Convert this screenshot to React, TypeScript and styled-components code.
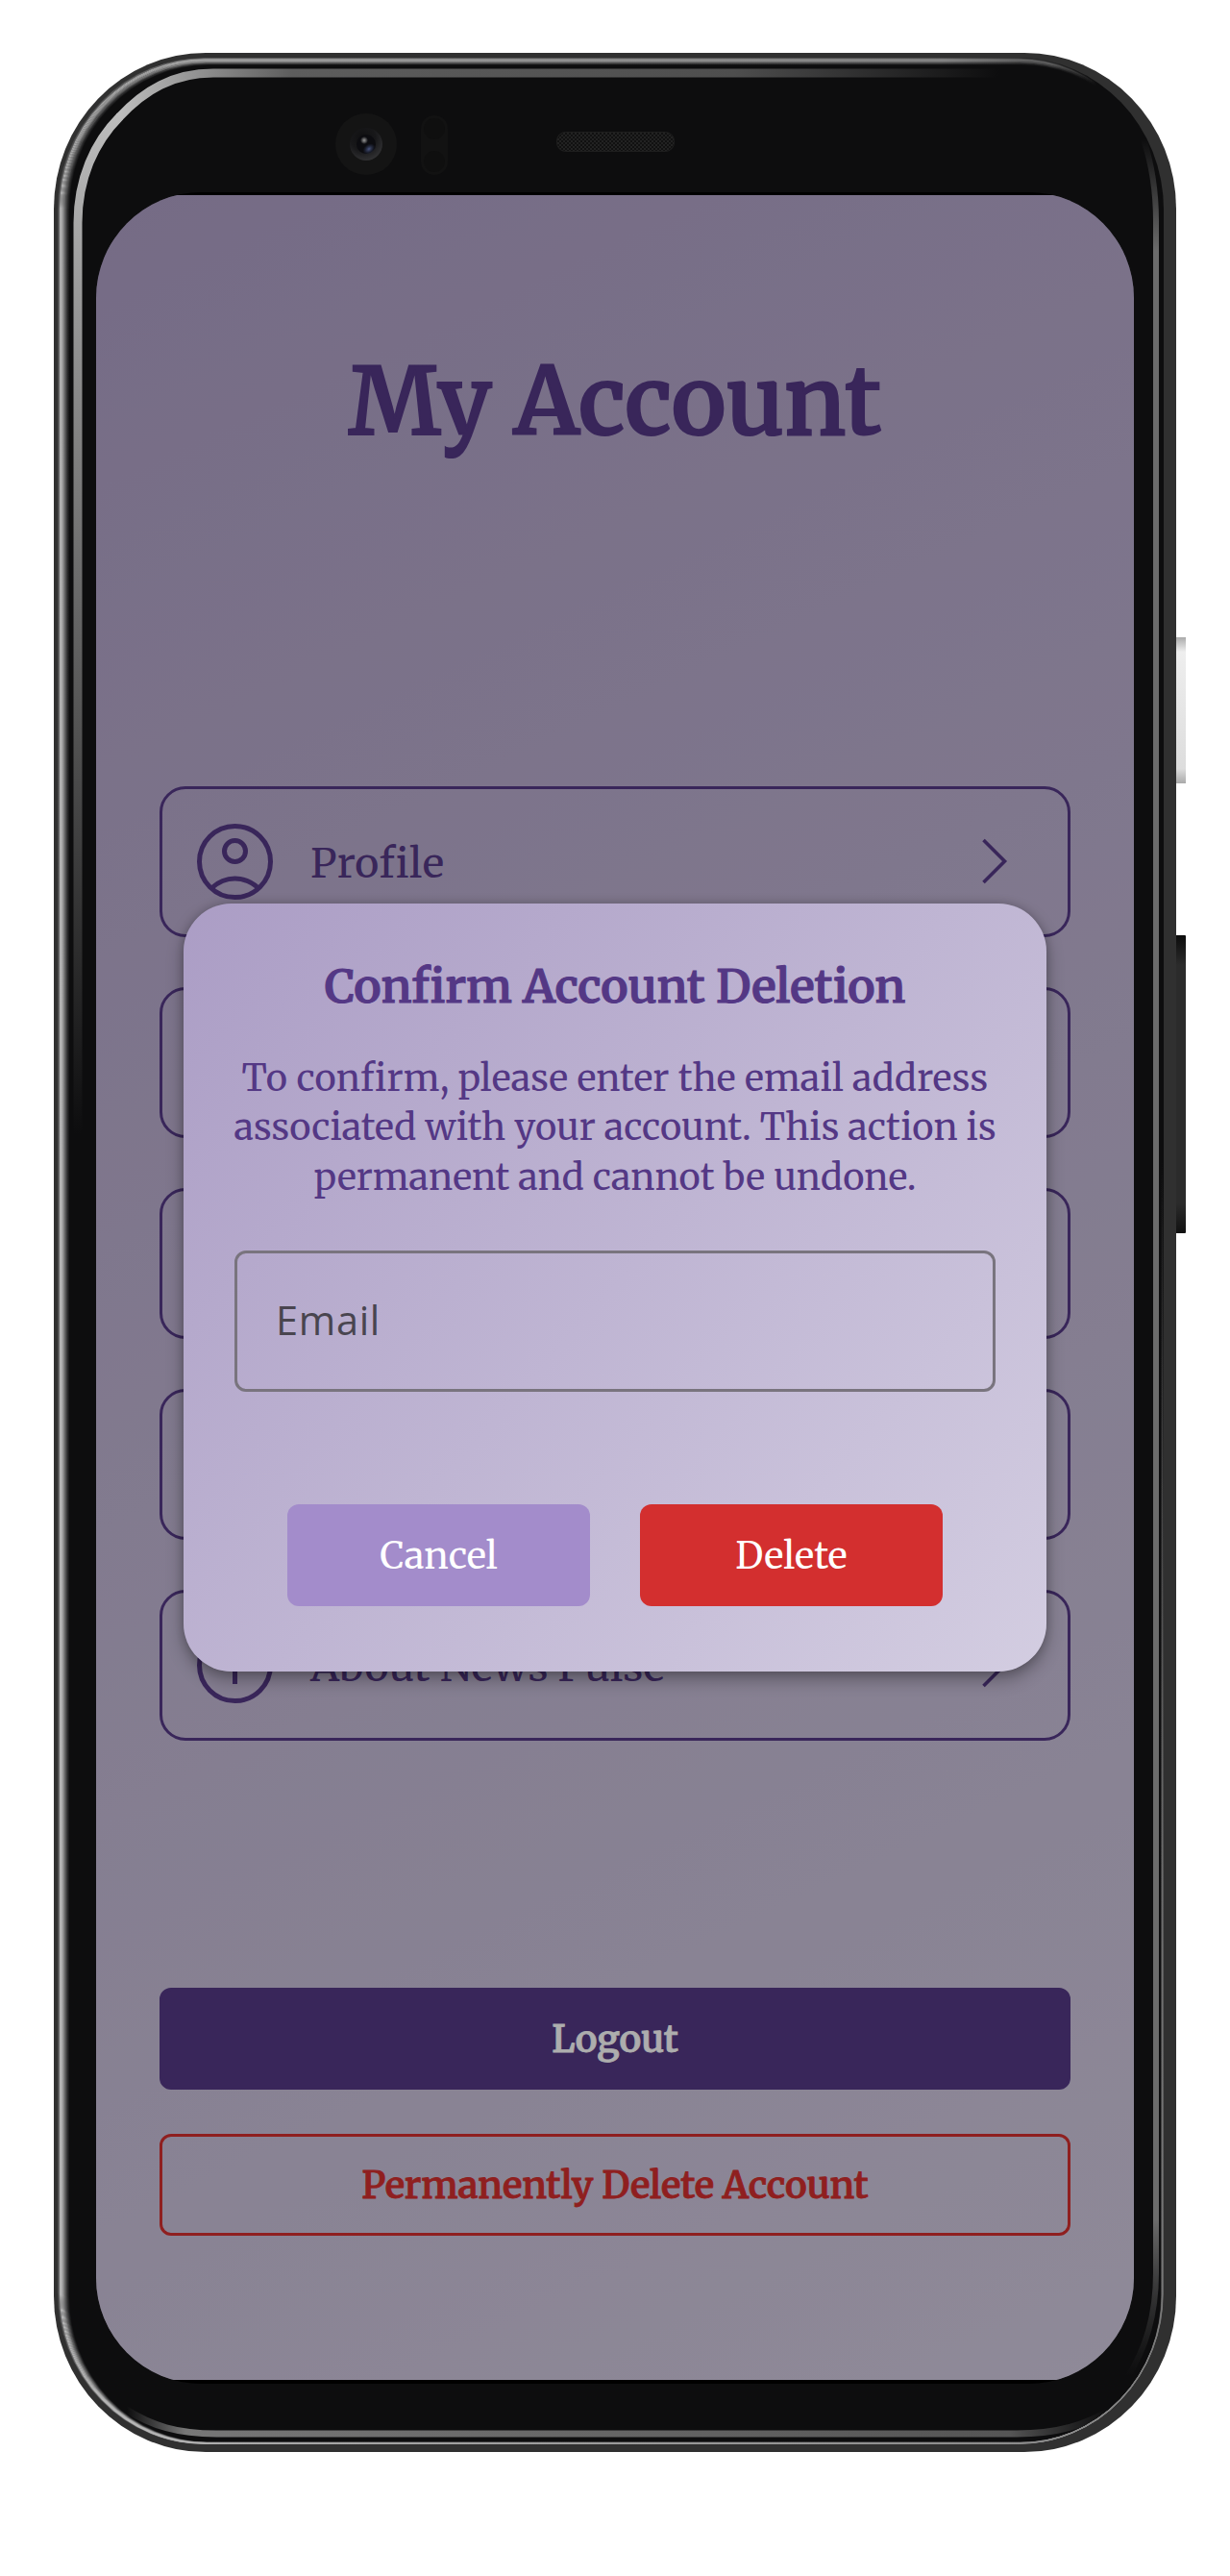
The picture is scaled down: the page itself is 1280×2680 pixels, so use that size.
import React from 'react';
import styled, { createGlobalStyle } from 'styled-components';

const purple = '#543885';
const red = '#d32f2f';
const serif = "Merriweather, 'DejaVu Serif Condensed', 'DejaVu Serif', serif";

const GlobalStyle = createGlobalStyle`
  *, *::before, *::after { box-sizing: border-box; }
  body { margin: 0; background: #fff; }
  button { font: inherit; border: 0; padding: 0; }
`;

const Page = styled.main`
  width: 1280px;
  height: 2680px;
  padding: 55px 56px 0;
  background: #fff;
  overflow: hidden;
`;

const Phone = styled.div`
  position: relative;
  width: 1168px;
  height: 2496px;
  padding: 145px 44px 0;
`;

const DeviceArt = styled.svg`
  position: absolute;
  left: -56px;
  top: -55px;
`;

const Glass = styled.div`
  position: relative;
  height: 2280px;
  padding: 3px 0 4px;
  border-radius: 110px;
  overflow: hidden;
  background: #000;
`;

const Screen = styled.div`
  position: relative;
  height: 2273px;
  padding: 155px 66px 0;
  display: flex;
  flex-direction: column;
  background: linear-gradient(154.6deg, #ad9ec5, #d3cce1);
  font-family: ${serif};
  font-variant-ligatures: none;
  color: ${purple};
`;

const Label = styled.span<{ $spacing?: number; $stroke?: number }>`
  white-space: nowrap;
  letter-spacing: ${p => p.$spacing ?? 0}px;
  -webkit-text-stroke: ${p => p.$stroke ?? 0}px currentColor;
`;

const Title = styled.h1`
  margin: 0 0 340px;
  height: 120px;
  line-height: 120px;
  font-size: 96.25px;
  font-weight: 600;
  text-align: center;
`;

const Menu = styled.nav`
  display: flex;
  flex-direction: column;
  gap: 52px;
  margin-bottom: 257px;
`;

const MenuRow = styled.div`
  display: flex;
  align-items: center;
  height: 157px;
  padding: 0 62px 0 34px;
  border: 3px solid ${purple};
  border-radius: 27px;
  font-size: 42.7px;
  line-height: 60px;
`;

const MenuText = styled.span`
  flex: 1;
  padding: 2px 0 0 37px;
`;

const Actions = styled.div`
  display: flex;
  flex-direction: column;
  gap: 46px;
`;

const ActionButton = styled.button<{ $outline?: boolean }>`
  height: 106px;
  padding-top: 1px;
  border-radius: 12px;
  font-size: 38.5px;
  font-weight: 600;
  line-height: 50px;
  color: ${p => (p.$outline ? red : '#fff')};
  background: ${p => (p.$outline ? 'transparent' : purple)};
  border: 3px solid ${p => (p.$outline ? red : purple)};
`;

const Scrim = styled.div`
  position: absolute;
  inset: 0;
  background: rgba(0, 0, 0, 0.32);
`;

const Dialog = styled.section`
  position: absolute;
  left: 91px;
  top: 737px;
  width: 898px;
  height: 799px;
  padding: 56px 53px 0;
  display: flex;
  flex-direction: column;
  border-radius: 50px;
  background: linear-gradient(131.7deg, #ab9dc5, #d3cde1);
  box-shadow: 0 8px 18px rgba(0, 0, 0, 0.32), 0 0 10px rgba(0, 0, 0, 0.16);
`;

const DialogTitle = styled.h2`
  margin: 0 0 40px;
  height: 60px;
  font-size: 48px;
  font-weight: 600;
  line-height: 60px;
  text-align: center;
`;

const Message = styled.p`
  margin: 0 0 51px;
  display: flex;
  flex-direction: column;
  align-items: center;
  font-size: 38px;
  line-height: 51.3px;
`;

const Field = styled.div`
  height: 147px;
  padding: 0 40px 2px;
  display: flex;
  align-items: center;
  border: 3px solid #79747e;
  border-radius: 12px;
  color: #49454f;
  font-family: 'Open Sans', 'Noto Sans', sans-serif;
  font-size: 41.5px;
`;

const DialogButtons = styled.div`
  display: flex;
  justify-content: center;
  gap: 52px;
  margin-top: 117px;
`;

const DialogButton = styled.button<{ $danger?: boolean }>`
  width: 315px;
  height: 106px;
  padding-top: 2px;
  border-radius: 12px;
  color: #fff;
  font-size: 38.5px;
  line-height: 50px;
  background: ${p => (p.$danger ? red : '#a38ccb')};
`;

const ProfileIcon = () => (
  <svg width="83" height="83" viewBox="0 0 83 83" fill="none" stroke="currentColor" strokeWidth="5">
    <circle cx="41.5" cy="41.5" r="37" />
    <circle cx="41.5" cy="30.5" r="11" />
    <path d="M17 69 Q28 59 41.5 59 T66 69" />
  </svg>
);

const InfoIcon = () => (
  <svg width="83" height="83" viewBox="0 0 83 83" fill="none" stroke="currentColor" strokeWidth="5">
    <circle cx="41.5" cy="41.5" r="37" />
    <path d="M41.5 36V61M41.5 22V27" />
  </svg>
);

const Chevron = () => (
  <svg width="30" height="51" viewBox="0 0 30 51" fill="none" stroke="currentColor" strokeWidth="3.6">
    <path d="M4.500 3L26.500 25L4.500 47" />
  </svg>
);

const rimOpacity = [0.35, 0.5, 0.95, 1, 0.9, 0.8, 0.65, 0.5, 0.38, 0.25, 0.15, 0.07];

const Device = () => (
  <DeviceArt width="1280" height="2680" viewBox="0 0 1280 2680" fill="none">
    <defs>
      <linearGradient id="volume" x1="0" y1="0" x2="0" y2="1">
        <stop offset="0" stopColor="#aaa" /><stop offset=".1" stopColor="#eee" />
        <stop offset=".9" stopColor="#ddd" /><stop offset="1" stopColor="#aaa" />
      </linearGradient>
      <linearGradient id="power" x1="0" y1="0" x2="0" y2="1">
        <stop offset="0" stopColor="#0c0c0c" /><stop offset=".1" stopColor="#2b2b2b" />
        <stop offset=".9" stopColor="#2b2b2b" /><stop offset="1" stopColor="#111" />
      </linearGradient>
      <linearGradient id="rim" gradientUnits="userSpaceOnUse" x1="60" y1="1200" x2="1205" y2="1130">
        <stop offset="0" stopColor="#b8b8b8" /><stop offset=".1" stopColor="#aaa" />
        <stop offset=".86" stopColor="#8a8a8a" /><stop offset=".96" stopColor="#777" stopOpacity=".5" />
        <stop offset="1" stopColor="#555" stopOpacity="0" />
      </linearGradient>
      <linearGradient id="bandLeft" gradientUnits="userSpaceOnUse" x1="0" y1="100" x2="0" y2="1180">
        <stop offset="0" stopColor="#c0c0c0" /><stop offset=".2" stopColor="#989898" />
        <stop offset=".6" stopColor="#555" /><stop offset="1" stopColor="#0d0d0e" />
      </linearGradient>
      <linearGradient id="bandTop" gradientUnits="userSpaceOnUse" x1="120" y1="0" x2="1040" y2="0">
        <stop offset="0" stopColor="#c0c0c0" /><stop offset=".2" stopColor="#5d5d5d" />
        <stop offset=".7" stopColor="#4e4e4e" /><stop offset="1" stopColor="#0d0d0e" />
      </linearGradient>
      <linearGradient id="bandRight" gradientUnits="userSpaceOnUse" x1="0" y1="145" x2="0" y2="2472">
        <stop offset="0" stopColor="#6b6b6b" stopOpacity="0" /><stop offset=".05" stopColor="#6b6b6b" />
        <stop offset=".93" stopColor="#6b6b6b" /><stop offset="1" stopColor="#444" stopOpacity="0" />
      </linearGradient>
      <linearGradient id="bandBottom" gradientUnits="userSpaceOnUse" x1="132" y1="0" x2="1154" y2="0">
        <stop offset="0" stopColor="#777" stopOpacity="0" /><stop offset=".06" stopColor="#777" />
        <stop offset=".9" stopColor="#555" /><stop offset="1" stopColor="#444" stopOpacity="0" />
      </linearGradient>
      <radialGradient id="lens" cx=".4" cy=".3" r=".8">
        <stop offset="0" stopColor="#101011" /><stop offset=".5" stopColor="#18181a" /><stop offset="1" stopColor="#38383a" />
      </radialGradient>
      <radialGradient id="glint"><stop offset="0" stopColor="#999" /><stop offset="1" stopColor="#999" stopOpacity="0" /></radialGradient>
      <radialGradient id="blue"><stop offset="0" stopColor="#4a5680" /><stop offset="1" stopColor="#2a3350" stopOpacity="0" /></radialGradient>
      <pattern id="mesh" width="4" height="4" patternUnits="userSpaceOnUse">
        <rect width="4" height="4" fill="#111" /><rect width="2" height="2" fill="#222" /><rect x="2" y="2" width="2" height="2" fill="#222" />
      </pattern>
    </defs>
    <rect x="1222" y="663" width="12" height="152" fill="url(#volume)" />
    <rect x="1222" y="973" width="12" height="310" rx="1" fill="url(#power)" />
    <rect x="56" y="55" width="1168" height="2496" rx="158" ry="162" fill="#303030" />
    <rect x="60" y="60" width="1151" height="2483" rx="152" ry="158" fill="#0d0d0e" />
    <path d="M81 1180V232C81 186 98 148 125 121" stroke="url(#bandLeft)" strokeWidth="9" />
    <path d="M124.500 121.500C150 94 180 76 222 76H1040" stroke="url(#bandTop)" strokeWidth="9" />
    <path d="M1190 145C1199 172 1203 198 1203 230V2365C1203 2410 1192 2445 1172 2475" stroke="url(#bandRight)" strokeWidth="6" />
    <path d="M130 2506C158 2524 185 2532 225 2532H1058C1100 2532 1130 2523 1158 2506" stroke="url(#bandBottom)" strokeWidth="7" />
    {rimOpacity.map((opacity, i) => (
      <rect
        key={i}
        x={60.5 + i}
        y={60.5 + i * 0.6}
        width={1150 - i * 1.2}
        height={2482 - i * 0.75}
        rx={151.5 - i * 0.6}
        ry={157.5 - i * 0.6}
        stroke="url(#rim)"
        strokeWidth="1.1"
        strokeOpacity={opacity}
      />
    ))}
    <circle cx="381" cy="150" r="32" fill="#141414" />
    <circle cx="381" cy="150" r="17" fill="url(#lens)" />
    <circle cx="381" cy="150" r="10" fill="#0c0c10" />
    <ellipse cx="384" cy="155" rx="7" ry="5" transform="rotate(-35 384 155)" fill="url(#blue)" />
    <circle cx="379" cy="146" r="4" fill="url(#glint)" />
    <rect x="438" y="120" width="28" height="62" rx="14" fill="#121212" />
    <circle cx="452" cy="134" r="11" fill="#0f0f0f" />
    <circle cx="452" cy="168" r="11" fill="#0f0f0f" />
    <rect x="579.5" y="137.500" width="122" height="20" rx="9" fill="url(#mesh)" stroke="#1e1e1e" />
  </DeviceArt>
);

type Row = { text: string; icon?: React.ReactNode; spacing?: number };

const rows: Row[] = [
  { text: 'Profile', icon: <ProfileIcon />, spacing: 0.5 },
  { text: '' },
  { text: '' },
  { text: '' },
  { text: 'About News Pulse', icon: <InfoIcon />, spacing: 0.05 },
];

const message = [
  { text: 'To confirm, please enter the email address', spacing: 0.17 },
  { text: 'associated with your account. This action is', spacing: 0 },
  { text: 'permanent and cannot be undone.', spacing: 0 },
];

export default function App() {
  return (
    <Page>
      <GlobalStyle />
      <Phone>
        <Device />
        <Glass>
          <Screen>
            <Title><Label $spacing={0.15} $stroke={2}>My Account</Label></Title>
            <Menu>
              {rows.map((row, i) => (
                <MenuRow key={i}>
                  {row.icon}
                  <MenuText>{row.text && <Label $spacing={row.spacing}>{row.text}</Label>}</MenuText>
                  {row.icon && <Chevron />}
                </MenuRow>
              ))}
            </Menu>
            <Actions>
              <ActionButton><Label $spacing={-0.15} $stroke={0.8}>Logout</Label></ActionButton>
              <ActionButton $outline><Label $spacing={-0.13} $stroke={0.8}>Permanently Delete Account</Label></ActionButton>
            </Actions>
            <Scrim />
            <Dialog role="dialog">
              <DialogTitle><Label $spacing={-0.1} $stroke={1}>Confirm Account Deletion</Label></DialogTitle>
              <Message>
                {message.map(line => <Label key={line.text} $spacing={line.spacing}>{line.text}</Label>)}
              </Message>
              <Field><Label $spacing={0.7}>Email</Label></Field>
              <DialogButtons>
                <DialogButton><Label>Cancel</Label></DialogButton>
                <DialogButton $danger><Label>Delete</Label></DialogButton>
              </DialogButtons>
            </Dialog>
          </Screen>
        </Glass>
      </Phone>
    </Page>
  );
}
